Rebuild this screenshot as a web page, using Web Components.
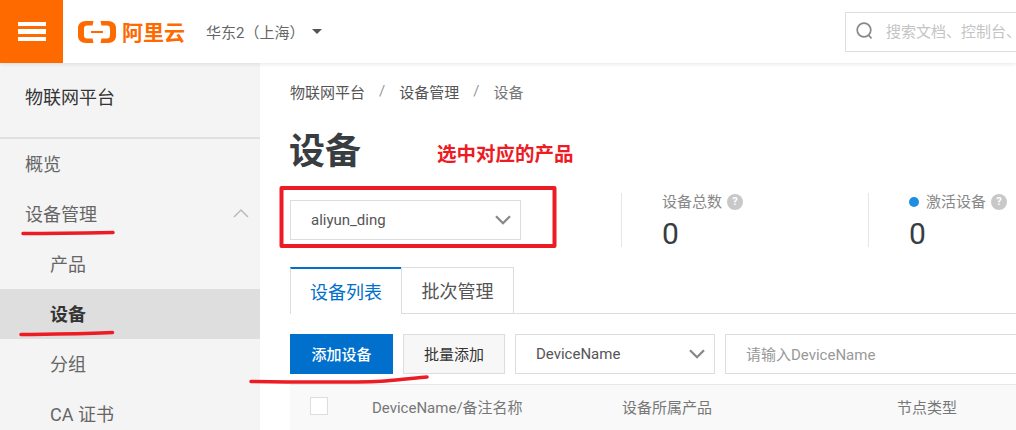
<!DOCTYPE html>
<html lang="zh">
<head>
<meta charset="utf-8">
<title>设备</title>
<style>
  html, body { margin: 0; height: 430px; overflow: hidden; background: #fff; }
  body { font-family: Roboto, "Noto Sans CJK SC", sans-serif; font-size: 15px; color: #333; }
</style>
</head>
<body>
<iot-app>
  <iot-topbar slot="top" region="华东2（上海）" placeholder="搜索文档、控制台、"></iot-topbar>
  <iot-sidebar slot="side" heading="物联网平台">
    <iot-nav-item>概览</iot-nav-item>
    <iot-nav-item open>设备管理</iot-nav-item>
    <iot-nav-item sub>产品</iot-nav-item>
    <iot-nav-item sub active>设备</iot-nav-item>
    <iot-nav-item sub>分组</iot-nav-item>
    <iot-nav-item sub>CA 证书</iot-nav-item>
  </iot-sidebar>
  <iot-device-page slot="main"></iot-device-page>
  <iot-scribbles slot="over"></iot-scribbles>
</iot-app>

<script>
// 共用的小工具：把样式和模板写进 shadow root
class Base extends HTMLElement {
  constructor() {
    super();
    this.raiz = this.attachShadow({mode: 'open'});
  }
  connectedCallback() {
    this.raiz.innerHTML = `<style>${this.estilos()}</style>${this.plantilla()}`;
  }
  estilos() { return ''; }
  plantilla() { return '<slot></slot>'; }
}

const chevron = (w = 16, h = 10, c = '#888') =>
  `<svg width="${w}" height="${h}" viewBox="0 0 16 10" fill="none" stroke="${c}" stroke-width="2.300"><path d="M1 1.200l7 7 7-7"/></svg>`;

class IotApp extends Base {
  estilos() { return `
    :host { display: block; position: relative; width: 1016px; height: 430px; overflow: hidden; }
    .top { position: relative; z-index: 2; }
    .body { display: flex; height: 367px; }
  `; }
  plantilla() { return `
    <div class="top"><slot name="top"></slot></div>
    <div class="body"><slot name="side"></slot><slot name="main"></slot></div>
    <slot name="over"></slot>
  `; }
}

class IotTopbar extends Base {
  estilos() { return `
    :host { display: flex; align-items: center; height: 63px; background: #fff; box-shadow: 0 1px 4px rgba(0,0,0,.1); }
    .menu { width: 63px; height: 63px; background: #ff6a00; display: flex; flex-direction: column; justify-content: center; align-items: center; gap: 3px; }
    .menu i { display: block; width: 28px; height: 4.500px; background: #fff; }
    .logo { display: flex; align-items: center; margin-left: 15px; gap: 6px; color: #ff6a00; font: 700 21px/1 "Noto Sans CJK SC", sans-serif; width: 128px; flex: none; }
    .region { font-size: 15px; color: #666; width: 91px; white-space: nowrap; flex: none; }
    .caret { width: 0; height: 0; border: 5px solid transparent; border-top: 5px solid #555; border-bottom: 0; margin-left: 15px; }
    .search { margin-left: auto; width: 171px; height: 40px; box-sizing: border-box; border: 1px solid #ddd; border-right: 0; display: flex; align-items: center; padding: 0 0 2px 10px; gap: 13px; flex: none; }
    .search span { color: #c4c4c4; font-size: 15px; white-space: nowrap; }
    svg { flex: none; }
  `; }
  plantilla() { return `
    <div class="menu"><i></i><i></i><i></i></div>
    <div class="logo">
      <svg width="38" height="24" viewBox="0 0 38 24" fill="#ff6a00"><path d="M8 1h7.500l-1 4.500H9c-2 0-3 1-3 3v7c0 2 1 3 3 3h5.500l1 4.500H8c-5 0-8-3-8-7V8c0-4 3-7 8-7z"/><path d="M30 1h-7.500l1 4.500H29c2 0 3 1 3 3v7c0 2-1 3-3 3h-5.500l-1 4.500H30c5 0 8-3 8-7V8c0-4-3-7-8-7z"/><rect x="13" y="11" width="12" height="2"/></svg>
      <span>阿里云</span>
    </div>
    <span class="region">${this.getAttribute('region')}</span>
    <span class="caret"></span>
    <div class="search">
      <svg width="17" height="18" viewBox="0 0 17 18" fill="none" stroke="#888" stroke-width="1.700"><circle cx="8" cy="8" r="6.800"/><path d="M12.500 13l3 3.500"/></svg>
      <span>${this.getAttribute('placeholder')}</span>
    </div>
  `; }
}

class IotSidebar extends Base {
  estilos() { return `
    :host { display: block; flex: none; width: 260px; height: 367px; background: #f4f4f4; overflow: hidden; }
    h2 { margin: 0; height: 76px; box-sizing: border-box; border-bottom: 2px solid #e0e0e0; padding: 21px 0 0 25px; font: 400 18px/28px Roboto, "Noto Sans CJK SC", sans-serif; color: #333; }
    nav { display: flex; flex-direction: column; }
  `; }
  plantilla() { return `<h2>${this.getAttribute('heading')}</h2><nav><slot></slot></nav>`; }
}

class IotNavItem extends Base {
  estilos() {
    const sub = this.hasAttribute('sub');
    const active = this.hasAttribute('active');
    return `
    :host { display: flex; align-items: center; flex: none; box-sizing: border-box; height: 50px; padding: 0 11px 2px ${sub ? 50 : 25}px;
      font-size: 18px; color: ${active ? '#333' : '#666'}; font-weight: ${active ? 700 : 400}; background: ${active ? '#dedede' : 'transparent'}; }
    svg { margin-left: auto; }
    `;
  }
  plantilla() {
    const flecha = this.hasAttribute('open')
      ? '<svg width="16" height="10" viewBox="0 0 16 10" fill="none" stroke="#bbb" stroke-width="1.500"><path d="M1 9l7-7 7 7"/></svg>'
      : '';
    return `<slot></slot>${flecha}`;
  }
}

class IotSelect extends Base {
  estilos() { return `
    :host { display: flex; align-items: center; box-sizing: border-box; height: 40px; background: #fff; border: 1px solid #ddd; padding: 0 9px 0 20px; font-size: 15px; color: #555; }
    svg { margin-left: auto; }
  `; }
  plantilla() { return `<slot></slot>${chevron()}`; }
}

class IotStat extends Base {
  estilos() { return `
    :host { display: block; box-sizing: border-box; height: 54px; border-left: 1px solid #e6e6e6; padding-left: 40px; }
    .label { display: flex; align-items: center; height: 18px; font-size: 15px; line-height: 18px; color: #888; white-space: nowrap; }
    .dot { flex: none; width: 10px; height: 10px; border-radius: 50%; background: #1e8fe0; margin-right: 7px; }
    .q { width: 16px; height: 16px; border-radius: 50%; background: #c8c8c8; color: #fff; font: 700 11px/16px Roboto, sans-serif; text-align: center; margin-left: 5px; }
    .value { font-size: 30px; line-height: 36px; color: #373d41; margin-top: 5px; }
  `; }
  plantilla() { return `
    <div class="label">${this.hasAttribute('dot') ? '<i class="dot"></i>' : ''}<slot></slot><span class="q">?</span></div>
    <div class="value">${this.getAttribute('value')}</div>
  `; }
}

class IotTabs extends Base {
  estilos() { return `
    :host { display: flex; height: 47px; box-sizing: border-box; border-bottom: 1px solid #ddd; margin-top: 20px; }
    div { box-sizing: border-box; height: 46px; display: flex; align-items: center; justify-content: center; font-size: 18px; padding-bottom: 2px; }
    .on { width: 111px; height: 47px; border: 1px solid #ddd; border-top: 2px solid #0070cc; border-bottom: 0; color: #0070cc; background: #fff; border-right: 0; }
    .off { width: 113px; border: 1px solid #ddd; border-bottom: 0; color: #555; }
  `; }
  plantilla() { return `<div class="on">设备列表</div><div class="off">批次管理</div>`; }
}

class IotToolbar extends Base {
  estilos() { return `
    :host { display: flex; gap: 10px; height: 40px; margin-top: 20px; font-size: 15px; }
    .pri { width: 103px; background: #0070cc; color: #fff; font-weight: 500; display: flex; align-items: center; justify-content: center; padding-bottom: 2px; box-sizing: border-box; }
    .sec { width: 102px; box-sizing: border-box; background: #f7f7f7; border: 1px solid #ddd; color: #333; display: flex; align-items: center; justify-content: center; padding-bottom: 2px; }
    iot-select { width: 200px; flex: none; }
    .input { flex: 1; box-sizing: border-box; border: 1px solid #ddd; border-right: 0; color: #999; display: flex; align-items: center; padding: 0 0 2px 20px; }
  `; }
  plantilla() { return `
    <div class="pri">添加设备</div>
    <div class="sec">批量添加</div>
    <iot-select>DeviceName</iot-select>
    <div class="input">请输入DeviceName</div>
  `; }
}

class IotTableHead extends Base {
  estilos() { return `
    :host { display: grid; grid-template-columns: 82px 250px 275px 1fr; align-items: center; box-sizing: border-box; height: 60px; margin-top: 10px; padding-bottom: 17px; border-top: 1px solid #e8e8e8; background: #f9f9f9; font-size: 15px; color: #777; }
    .box { width: 16px; height: 16px; border: 1px solid #ddd; background: #fff; margin-left: 20px; }
  `; }
  plantilla() { return `<div><div class="box"></div></div><div>DeviceName/备注名称</div><div>设备所属产品</div><div>节点类型</div>`; }
}

class IotDevicePage extends Base {
  estilos() { return `
    :host { display: block; flex: 1; min-width: 0; padding-left: 30px; background: #fff; }
    .crumb { display: flex; height: 58px; box-sizing: border-box; padding-bottom: 2px; align-items: center; font-size: 15px; color: #555; }
    .crumb b { font-weight: 400; color: #999; margin: 0 14px; }
    .crumb em { font-style: normal; color: #777; }
    h1 { margin: 0 0 0 -1px; font: 700 36px/44px "Noto Sans CJK SC", sans-serif; color: #373d41; height: 44px; padding-top: 5px; }
    .stats { display: grid; grid-template-columns: 331px 247px 1fr; align-items: center; height: 54px; margin-top: 23px; }
    iot-select { width: 231px; }
  `; }
  plantilla() { return `
    <div class="crumb"><span>物联网平台</span><b>/</b><span>设备管理</span><b>/</b><em>设备</em></div>
    <h1>设备</h1>
    <div class="stats">
      <iot-select>aliyun_ding</iot-select>
      <iot-stat value="0">设备总数</iot-stat>
      <iot-stat value="0" dot>激活设备</iot-stat>
    </div>
    <iot-tabs></iot-tabs>
    <iot-toolbar></iot-toolbar>
    <iot-table-head></iot-table-head>
  `; }
}

// 截图上的红色批注，盖在页面上面
class IotScribbles extends Base {
  estilos() { return `
    :host { position: absolute; inset: 0; pointer-events: none; }
    svg { position: absolute; left: 0; top: 0; }
    .nota { position: absolute; left: 437px; top: 139px; font: 700 19.500px/28px "Noto Sans CJK SC", sans-serif; color: #ed1c24; white-space: nowrap; }
  `; }
  plantilla() { return `
    <svg width="1016" height="430" fill="none" stroke="#ed1c24" stroke-linecap="round" stroke-linejoin="round">
      <rect x="281.500" y="188" width="273" height="58" stroke-width="4"/>
      <path d="M23 233.500C50 233.500 85 233 113 232.500" stroke-width="3.500"/>
      <path d="M21 334.500C50 334 85 334 112.500 332.500" stroke-width="3.500"/>
      <path d="M251 381.500C300 382 360 383 385 381C400 380 415 378 427 377" stroke-width="3.500"/>
    </svg>
    <div class="nota">选中对应的产品</div>
  `; }
}

[
  ['iot-app', IotApp], ['iot-topbar', IotTopbar], ['iot-sidebar', IotSidebar], ['iot-nav-item', IotNavItem],
  ['iot-select', IotSelect], ['iot-stat', IotStat], ['iot-tabs', IotTabs], ['iot-toolbar', IotToolbar],
  ['iot-table-head', IotTableHead], ['iot-device-page', IotDevicePage], ['iot-scribbles', IotScribbles]
].forEach(([etiqueta, clase]) => customElements.define(etiqueta, clase));
</script>
</body>
</html>
